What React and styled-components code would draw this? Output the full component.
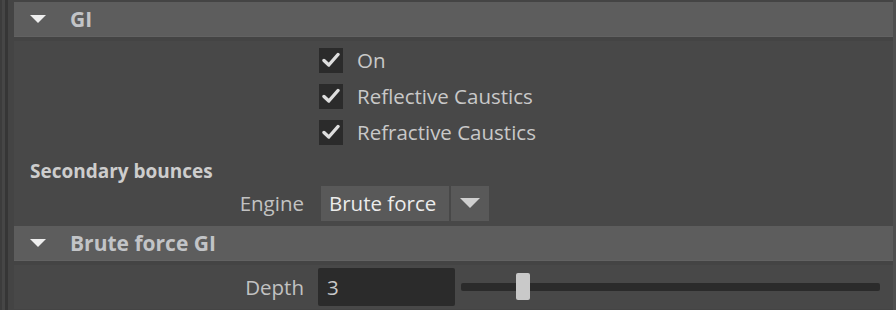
import React from 'react';
import styled, { createGlobalStyle } from 'styled-components';

const Global = createGlobalStyle`
  html, body {
    margin: 0;
    padding: 0;
    background: #444444;
  }
  body {
    font-family: "Open Sans", "Noto Sans", sans-serif;
    color: #c8c8c8;
  }
`

const Page = styled.div`
  display: flex;
  width: 896px;
  height: 310px;
  overflow: hidden;
  background: #444444;
`

const Gutter = styled.div`
  width: 14px;
  flex: none;
  background: linear-gradient(to right, #3c3c3c 0 2px, #464646 2px 5px, #363636 5px 8px, #444444 8px);
`

const Main = styled.div`
  flex: 1;
  display: flex;
  flex-direction: column;
  padding-top: 2px;
  border-right: 3px solid #4f4f4f;
`

const Header = styled.div`
  height: 35px;
  flex: none;
  display: flex;
  align-items: center;
  background: #5d5d5d;
  border-bottom: 1px solid #626262;
  box-sizing: border-box;
  font-weight: 700;
  font-size: 21px;
  color: #c2c4c7;
`

const Arrow = styled.span`
  width: 0;
  height: 0;
  margin-left: 16px;
  margin-right: 24px;
  border-left: 8px solid transparent;
  border-right: 8px solid transparent;
  border-top: 8px solid #eeeeee;
`

const Body = styled.div`
  margin-top: 4px;
  background: #484848;
  display: flex;
  flex-direction: column;
  padding: ${p => p.$pad || '0'};
  height: ${p => p.$h}px;
  box-sizing: border-box;
`

const CheckRow = styled.div`
  height: 36px;
  display: flex;
  align-items: center;
  padding-left: 305px;
  gap: 14px;
  font-size: 20.5px;
  color: #c9c9c9;
`

const Box = styled.span`
  width: 24px;
  height: 25px;
  background: #2b2b2b;
  display: flex;
  align-items: center;
  justify-content: center;
`

const Group = styled.div`
  height: 28px;
  margin-top: 7px;
  display: flex;
  align-items: center;
  padding-left: 16px;
  font-size: 19px;
  font-weight: 700;
  color: #cdcdcd;
`

const FieldRow = styled.div`
  display: flex;
  align-items: center;
  height: ${p => p.$h}px;
`

const Label = styled.span`
  width: 290px;
  text-align: right;
  font-size: 20.5px;
  color: #c2c2c2;
  flex: none;
`

const Dropdown = styled.div`
  margin-left: 17px;
  display: flex;
  height: 35px;
  gap: 2px;
`

const DropText = styled.div`
  width: 128px;
  background: #595959;
  display: flex;
  align-items: center;
  padding-left: 8px;
  box-sizing: border-box;
  font-size: 20.5px;
  color: #ececec;
`

const DropBtn = styled.div`
  width: 38px;
  background: #595959;
  display: flex;
  align-items: center;
  justify-content: center;
  &::after {
    content: '';
    border-left: 10px solid transparent;
    border-right: 10px solid transparent;
    border-top: 10px solid #cfcfcf;
  }
`

const Input = styled.div`
  margin-left: 14px;
  width: 137px;
  height: 38px;
  background: #2b2b2b;
  border-radius: 2px;
  display: flex;
  align-items: center;
  padding-left: 9px;
  box-sizing: border-box;
  font-size: 20.5px;
  color: #c8c8c8;
`

const Slider = styled.div`
  flex: 1;
  margin: 0 13px 0 6px;
  height: 28px;
  display: flex;
  align-items: center;
  position: relative;
`

const Track = styled.div`
  flex: 1;
  height: 8px;
  background: #2b2b2b;
  border-radius: 2px;
`

const Thumb = styled.div`
  position: absolute;
  top: 0;
  width: 14px;
  height: 27px;
  border-radius: 2px;
  background: #c9c9c9;
`

function Check({ children }) {
  return (
    <CheckRow>
      <Box>
        <svg width="18" height="16" viewBox="0 0 18 16">
          <path d="M2 8.5 L6.8 13 L16 2.5" fill="none" stroke="#dedede" strokeWidth="3.4" strokeLinecap="round" strokeLinejoin="round" />
        </svg>
      </Box>
      <span>{children}</span>
    </CheckRow>
  )
}

export default function App() {
  return (
    <Page>
      <Global />
      <Gutter />
      <Main>
        <Header><Arrow />GI</Header>
        <Body $h={185} $pad="1px 0 0">
          <Check>On</Check>
          <Check>Reflective Caustics</Check>
          <Check>Refractive Caustics</Check>
          <Group>Secondary bounces</Group>
          <FieldRow $h={36}>
            <Label>Engine</Label>
            <Dropdown>
              <DropText>Brute force</DropText>
              <DropBtn />
            </Dropdown>
          </FieldRow>
        </Body>
        <Header><Arrow />Brute force GI</Header>
        <Body $h={44} $pad="2px 0 0">
          <FieldRow $h={40}>
            <Label>Depth</Label>
            <Input>3</Input>
            <Slider>
              <Track />
              <Thumb style={{ left: '55px' }} />
            </Slider>
          </FieldRow>
        </Body>
      </Main>
    </Page>
  )
}
